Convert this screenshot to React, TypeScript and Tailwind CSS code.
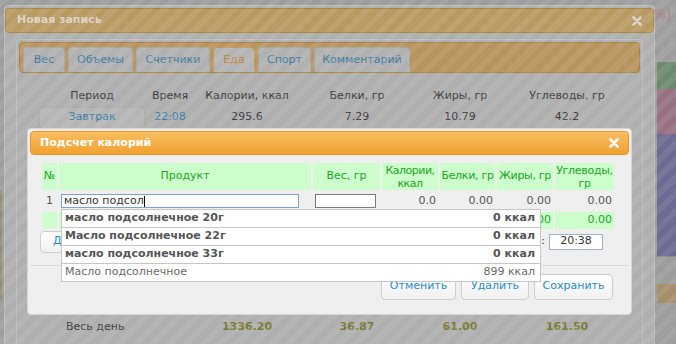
import React from "react";

const stripes =
  "bg-[image:repeating-linear-gradient(135deg,rgba(255,255,255,0.08)_0px,rgba(255,255,255,0.08)_6px,rgba(0,0,0,0)_6px,rgba(0,0,0,0)_12px)]";

const tabs = [
  { label: "Вес", w: "w-[42px]" },
  { label: "Объемы", w: "w-[65px]" },
  { label: "Счетчики", w: "w-[74px]" },
  { label: "Еда", w: "w-[42px]", active: true },
  { label: "Спорт", w: "w-[53px]" },
  { label: "Комментарий", w: "w-[96px]" },
];

const suggestions = [
  { name: "масло подсолнечное 20г", kcal: "0 ккал", bold: true },
  { name: "Масло подсолнечное 22г", kcal: "0 ккал", bold: true },
  { name: "масло подсолнечное 33г", kcal: "0 ккал", bold: true },
  { name: "Масло подсолнечное", kcal: "899 ккал", bold: false },
];

function CloseIcon({ color }: { color: string }) {
  return (
    <svg width="10" height="10" viewBox="0 0 10 10">
      <path d="M1.5 1.5 L8.5 8.5 M8.5 1.5 L1.5 8.5" stroke={color} strokeWidth="2.6" strokeLinecap="round" />
    </svg>
  );
}

function Btn({ label, w }: { label: string; w: string }) {
  return (
    <div
      className={`${w} h-[26px] flex items-center justify-center rounded-[4px] border border-[#cdcdcd] bg-gradient-to-b from-[#ffffff] to-[#f1f1f1] text-[#2a8bc6]`}
    >
      {label}
    </div>
  );
}

export default function App() {
  return (
    <div className="relative w-[676px] h-[344px] overflow-hidden bg-[#9d9d9d] font-['DejaVu_Sans',sans-serif] text-[11px]">
      {/* page behind the dialogs */}
      <div className="flex h-full">
        <div className="w-[4px] flex flex-col">
          <div className="h-[190px]" />
          <div className="h-[110px] w-[2px] bg-[#9a8c74]" />
        </div>

        {/* outer dialog: Новая запись */}
        <div className="w-[651px] mt-[5px] h-[360px] bg-[#afafaf] border-x border-t border-[#bdbdbd] rounded-t-[4px] pt-[2px]">
          <div className="h-[25px] rounded-[4px] bg-[#b99a63] border border-[#a7843f] flex items-center justify-between pl-[11px] pr-[11px]">
            <span className="font-bold text-[#dcd3c3]">Новая запись</span>
            <CloseIcon color="#d9d3c9" />
          </div>

          <div className="mt-[6px] mx-[11px] h-[330px] border border-[#bebebe] rounded-[4px] p-[2px]">
            <div className="h-[31px] rounded-[4px] bg-[#b8945e] border border-[#a88240] flex items-end pl-[3px] gap-[3px]">
              {tabs.map((t) => (
                <div
                  key={t.label}
                  className={`${t.w} h-[25px] flex items-center justify-center rounded-t-[4px] border border-b-0 ${
                    t.active
                      ? "bg-[#b4b4b4] border-[#c29a55] text-[#bf8a38]"
                      : "bg-[#b1b1b1] border-[#a5a5a5] text-[#3d7ea0]"
                  }`}
                >
                  {t.label}
                </div>
              ))}
            </div>

            <div className="ml-[20px] mt-[15px] grid grid-cols-[106px_50px_104px_116px_90px_124px] text-center text-[#3e3e3e]">
              <div className="h-[16px]">Период</div>
              <div>Время</div>
              <div>Калории, ккал</div>
              <div>Белки, гр</div>
              <div>Жиры, гр</div>
              <div>Углеводы, гр</div>

              <div className="mt-[2px] h-[22px] flex items-center justify-center rounded-[4px] border border-[#a9a9a9] bg-[#b5b5b5] text-[#3a80a6]">
                Завтрак
              </div>
              <div className="mt-[2px] flex items-center justify-center text-[#3a80a6]">22:08</div>
              <div className="mt-[2px] flex items-center justify-center">295.6</div>
              <div className="mt-[2px] flex items-center justify-center">7.29</div>
              <div className="mt-[2px] flex items-center justify-center">10.79</div>
              <div className="mt-[2px] flex items-center justify-center">42.2</div>
            </div>

            <div className="h-[190px]" />

            <div className="ml-[20px] grid grid-cols-[106px_50px_104px_116px_90px_124px] text-center font-bold text-[#7b7a36]">
              <div className="h-[16px] pl-[27px] text-left font-normal text-[#3e3e3e]">Весь день</div>
              <div />
              <div>1336.20</div>
              <div>36.87</div>
              <div>61.00</div>
              <div>161.50</div>
            </div>
          </div>
        </div>

        <div className="flex-1 flex flex-col pt-[6px]">
          <div className="h-[56px] -ml-[2px] text-[14px] leading-[16px] text-[#b57c8c]">%)</div>
          <div className="ml-[2px] h-[27px] bg-[#6e8a6e]" />
          <div className="ml-[2px] h-[45px] bg-[#977181]" />
          <div className="ml-[2px] h-[122px] bg-[#6b6b93]" />
          <div className="ml-[2px] h-[28px] border-t border-[#8a8a8a]" />
          <div className="ml-[2px] h-[19px] bg-[#a68e6b]" />
        </div>
      </div>

      {/* overlay of the inner modal */}
      <div className={`absolute inset-0 ${stripes}`} />

      {/* inner modal: Подсчет калорий */}
      <div className="absolute left-[27px] top-[128px] w-[605px] h-[187px] rounded-[4px] border border-[#d5d5d5] bg-[#efefef] p-[2px] text-[#444]">
        <div className="h-[24px] rounded-[4px] border border-[#e8962a] bg-gradient-to-b from-[#f8bf60] to-[#f0a12e] flex items-center justify-between pl-[9px] pr-[9px]">
          <span className="font-bold text-white">Подсчет калорий</span>
          <CloseIcon color="#ffffff" />
        </div>

        <div className="ml-[10px] mt-[8px] w-[575px]">
          <div className="ml-[2px] grid grid-cols-[15px_252px_67px_56px_55px_56px_59px] gap-[2px]">
            <div className="h-[27px] bg-[#ccffcc] text-[#22a322] flex items-center justify-center">№</div>
            <div className="bg-[#ccffcc] text-[#22a322] flex items-center justify-center">Продукт</div>
            <div className="bg-[#ccffcc] text-[#22a322] flex items-center justify-center">Вес, гр</div>
            <div className="bg-[#ccffcc] text-[#22a322] flex items-center justify-center text-center leading-[13px] tracking-[-0.5px]">
              Калории,
              <br />
              ккал
            </div>
            <div className="bg-[#ccffcc] text-[#22a322] flex items-center justify-center tracking-[-0.3px]">Белки, гр</div>
            <div className="bg-[#ccffcc] text-[#22a322] flex items-center justify-center tracking-[-0.3px]">Жиры, гр</div>
            <div className="bg-[#ccffcc] text-[#22a322] flex items-center justify-center text-center leading-[13px] tracking-[-0.3px]">
              Углеводы,
              <br />
              гр
            </div>

            <div className="h-[18px] flex items-center justify-center text-[#555]">1</div>
            <div className="flex items-center pl-[2px]">
              <div className="w-[238px] h-[14px] border border-[#7c9fd6] bg-white flex items-center pl-[2px] text-[#333] leading-[12px]">
                масло подсол
                <span className="w-[1px] h-[11px] bg-black" />
              </div>
            </div>
            <div className="flex items-center pl-[2px]">
              <div className="w-[61px] h-[14px] border border-[#7a7a7a] bg-white" />
            </div>
            <div className="flex items-center justify-end pr-[2px] text-[#555]">0.0</div>
            <div className="flex items-center justify-end pr-[2px] text-[#555]">0.00</div>
            <div className="flex items-center justify-end pr-[2px] text-[#555]">0.00</div>
            <div className="flex items-center justify-end pr-[2px] text-[#555]">0.00</div>

            <div className="h-[16px] bg-[#ccffcc]" />
            <div className="bg-[#ccffcc]" />
            <div className="bg-[#ccffcc]" />
            <div className="bg-[#ccffcc]" />
            <div className="bg-[#ccffcc]" />
            <div className="bg-[#ccffcc] text-[#22a322] flex items-center justify-end pr-[2px]">0.00</div>
            <div className="bg-[#ccffcc] text-[#22a322] flex items-center justify-end pr-[2px]">0.00</div>
          </div>

          <div className="mt-[2px] h-[22px] flex items-center justify-between">
            <div className="h-[22px] px-[12px] flex items-center rounded-[4px] border border-[#cdcdcd] bg-gradient-to-b from-[#ffffff] to-[#f1f1f1] text-[#2a8bc6]">
              Добавить
            </div>
            <div className="flex items-center gap-[4px] mr-[12px] text-[#444]">
              <span>:</span>
              <div className="w-[54px] h-[16px] border border-[#9fb2cc] bg-white flex items-center justify-center text-[#333]">
                20:38
              </div>
            </div>
          </div>
        </div>

        <div className="mt-[12px] border-t border-[#dadada]" />

        <div className="mt-[8px] flex justify-end gap-[5px] pr-[16px]">
          <Btn label="Отменить" w="w-[75px]" />
          <Btn label="Удалить" w="w-[68px]" />
          <Btn label="Сохранить" w="w-[79px]" />
        </div>
      </div>

      {/* autocomplete list */}
      <div className="absolute left-[61px] top-[209px] w-[480px] border-x border-t border-[#c6c6c6] bg-white">
        {suggestions.map((s) => (
          <div
            key={s.name}
            className={`h-[18px] border-b border-[#c6c6c6] flex items-center justify-between pl-[3px] pr-[5px] ${
              s.bold ? "font-bold text-[#555]" : "text-[#6a6a6a]"
            }`}
          >
            <span>{s.name}</span>
            <span>{s.kcal}</span>
          </div>
        ))}
      </div>
    </div>
  );
}
